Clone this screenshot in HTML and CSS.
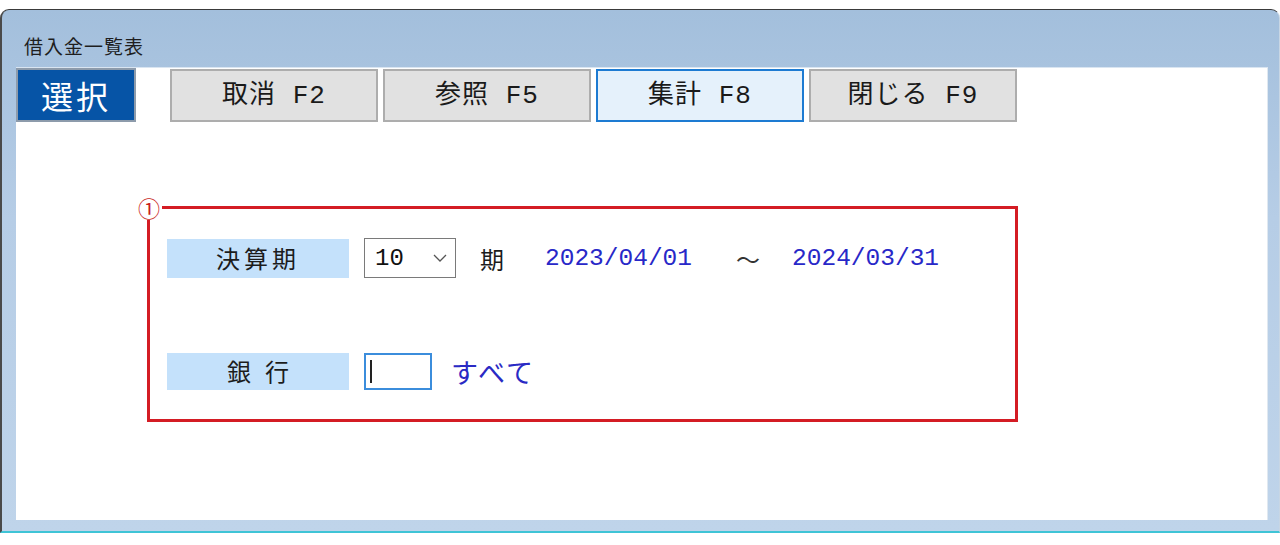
FILE: index.html
```html
<!DOCTYPE html>
<html lang="ja">
<head>
<meta charset="utf-8">
<title>借入金一覧表</title>
<link rel="stylesheet" href="styles.css">
</head>
<body>
<div class="window">
  <div class="titlebar"><span class="title">借入金一覧表</span></div>
  <div class="client">
    <div class="toolbar">
      <div class="btn-select">選択</div>
      <div class="btns">
        <div class="btn">取消 F2</div>
        <div class="btn">参照 F5</div>
        <div class="btn btn-focus">集計 F8</div>
        <div class="btn">閉じる F9</div>
      </div>
    </div>
    <div class="panel">
      <span class="marker">①</span>
      <div class="row">
        <div class="label">決算期</div>
        <div class="select"><span class="sel-val">10</span><svg class="chev" width="14" height="8" viewBox="0 0 14 8"><path d="M1 1 L7 7 L13 1" fill="none" stroke="#555" stroke-width="1.3"/></svg></div>
        <span class="unit">期</span>
        <span class="date">2023/04/01</span>
        <span class="tilde">～</span>
        <span class="date">2024/03/31</span>
      </div>
      <div class="row row2">
        <div class="label label2">銀行</div>
        <div class="input"><span class="caret"></span></div>
        <span class="all">すべて</span>
      </div>
    </div>
  </div>
</div>
</body>
</html>
```
FILE: styles.css
```css
html, body {
  margin: 0;
  padding: 0;
  background: #ffffff;
}
body {
  font-family: "Noto Sans CJK JP", "Liberation Sans", sans-serif;
  color: #222;
  height: 545px;
  overflow: hidden;
}
.window {
  margin-top: 9px;
  height: 524px;
  box-sizing: border-box;
  border-top: 1px solid #3a3a3a;
  border-left: 2px solid #4a4a4a;
  border-right: 1px solid #c8d6e4;
  border-bottom: 2px solid #3fc4d6;
  border-radius: 9px 9px 0 0;
  background: linear-gradient(180deg, #a3bfdc 0%, #b6cde6 40%, #bfd4ea 100%);
  padding: 0 11px 11px 14px;
  display: flex;
  flex-direction: column;
}
.titlebar {
  height: 57px;
  flex: none;
  display: flex;
  align-items: center;
  padding-left: 8px;
  padding-top: 14px;
  box-sizing: border-box;
}
.title {
  font-size: 19px;
  letter-spacing: 1px;
  color: #1e1e1e;
}
.client {
  flex: 1;
  background: #ffffff;
  border-top: 1px solid #d9e5f1;
  border-right: 1px solid #e0e8f0;
}
.toolbar {
  display: flex;
  align-items: flex-start;
}
.btn-select {
  width: 120px;
  height: 54px;
  box-sizing: border-box;
  background: #0654a6;
  border: 2px solid #8d9bab;
  color: #fff;
  font-size: 32px;
  letter-spacing: 3px;
  display: flex;
  align-items: center;
  justify-content: center;
  line-height: 1;
}
.btns {
  display: flex;
  gap: 5px;
  margin-left: 34px;
  margin-top: 1px;
}
.btn {
  width: 208px;
  height: 53px;
  box-sizing: border-box;
  background: #e1e1e1;
  border: 2px solid #adadad;
  font-family: "Liberation Mono", "Noto Sans CJK JP", monospace;
  font-size: 26px;
  letter-spacing: 1px;
  color: #1a1a1a;
  display: flex;
  align-items: center;
  justify-content: center;
  line-height: 1;
  white-space: pre;
}
.btn-focus {
  background: #e5f1fb;
  border-color: #1d7bd2;
}
.panel {
  position: relative;
  margin-left: 131px;
  margin-top: 84px;
  width: 871px;
  height: 216px;
  box-sizing: border-box;
  border: 3px solid #d41c24;
  padding: 29px 17px 0 17px;
}
.marker {
  position: absolute;
  left: -14px;
  top: -15px;
  width: 26px;
  height: 26px;
  background: #fff;
  color: #c81e22;
  font-size: 22px;
  line-height: 26px;
  text-align: center;
}
.row {
  display: flex;
  align-items: center;
  height: 40px;
}
.row2 {
  margin-top: 73px;
}
.label {
  width: 182px;
  height: 39px;
  background: #c4e1fb;
  display: flex;
  align-items: center;
  justify-content: center;
  font-size: 24px;
  letter-spacing: 4px;
  color: #1c1c1c;
  line-height: 1;
}
.label2 {
  height: 37px;
  letter-spacing: 14px;
  padding-left: 14px;
  box-sizing: border-box;
}
.select {
  margin-left: 15px;
  width: 92px;
  height: 40px;
  box-sizing: border-box;
  border: 1px solid #7a7a7a;
  display: flex;
  align-items: center;
  padding-left: 10px;
  padding-right: 8px;
  justify-content: space-between;
}
.sel-val {
  font-family: "Liberation Mono", monospace;
  font-size: 24px;
  color: #111;
}
.chev {
  display: block;
}
.unit {
  margin-left: 24px;
  font-size: 24px;
  color: #1c1c1c;
}
.date {
  font-family: "Liberation Mono", monospace;
  font-size: 24.5px;
  color: #2828c8;
}
.unit + .date {
  margin-left: 41px;
}
.tilde {
  margin-left: 44px;
  margin-right: 32px;
  font-size: 24px;
  color: #333;
}
.input {
  margin-left: 15px;
  width: 68px;
  height: 37px;
  box-sizing: border-box;
  border: 2px solid #3b8ddc;
  display: flex;
  align-items: center;
  padding-left: 4px;
}
.caret {
  width: 2px;
  height: 23px;
  background: #222;
}
.all {
  margin-left: 19px;
  font-size: 27px;
  letter-spacing: 2px;
  color: #2a2ac4;
  line-height: 1;
}
```
